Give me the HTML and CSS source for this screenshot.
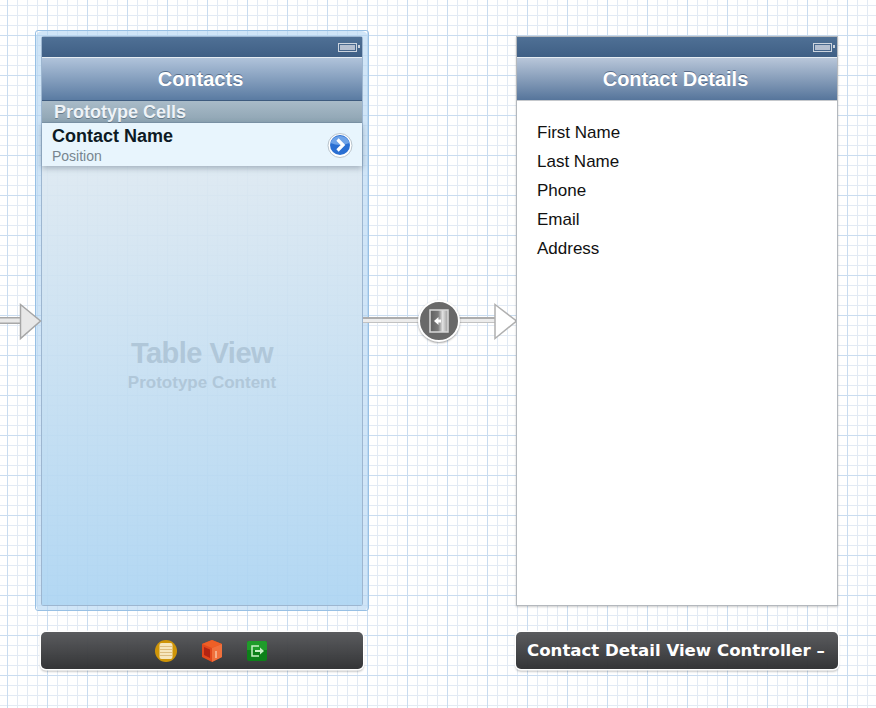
FILE: index.html
```html
<!DOCTYPE html>
<html lang="en">
<head>
<meta charset="UTF-8" />
<meta name="viewport" content="width=device-width, initial-scale=1" />
<title>Storyboard</title>
<link rel="stylesheet" href="styles.css">
</head>
<body>
<main class="canvas">

  <section class="scene scene-selected">
    <div class="screen">
      <div class="status-bar">
        <span class="battery"><span class="battery-fill"></span></span>
      </div>
      <div class="nav-bar">Contacts</div>
      <div class="section-header">Prototype Cells</div>
      <div class="cell">
        <div>
          <div class="cell-title">Contact Name</div>
          <div class="cell-sub">Position</div>
        </div>
        <svg class="disclosure" width="26" height="26" viewBox="0 0 26 26">
          <circle cx="13" cy="13.500" r="12" fill="#fff" stroke="#b9c4cc" stroke-width="1"/>
          <circle cx="13" cy="13" r="10" fill="#2a6fd2"/>
          <path d="M3.500 11 A10 10 0 0 1 22.500 11 Q13 15 3.500 11 Z" fill="#6ea3e8"/>
          <path d="M10.500 7.500 L16 13 L10.500 18.500" fill="none" stroke="#fff" stroke-width="3.200"/>
        </svg>
      </div>
      <div class="table-body">
        <div class="table-label">Table View</div>
        <div class="table-sublabel">Prototype Content</div>
      </div>
    </div>
  </section>

  <!-- incoming arrow -->
  <svg class="entry-arrow" width="44" height="40" viewBox="0 0 44 40">
    <rect x="0" y="15" width="22" height="7" fill="#a8a8a8"/>
    <rect x="0" y="16.500" width="22" height="4" fill="#e8e8e8"/>
    <path d="M20.500 2.500 L40.500 19 L20.500 36.500 Z" fill="#e8e8e8" stroke="#a6a6a6" stroke-width="1.500"/>
  </svg>

  <!-- segue -->
  <div class="segue">
    <div class="segue-line"></div>
    <div class="segue-badge">
      <svg width="24" height="26" viewBox="0 0 24 26">
        <defs>
          <linearGradient id="pageGrad" x1="0" x2="1" y1="0" y2="0">
            <stop offset="0" stop-color="#5f5f5f"/>
            <stop offset="0.450" stop-color="#7a7a7a"/>
            <stop offset="0.700" stop-color="#e2e2e2"/>
            <stop offset="1" stop-color="#9a9a9a"/>
          </linearGradient>
        </defs>
        <rect x="3" y="2" width="18" height="22" fill="url(#pageGrad)" stroke="#d8d8d8" stroke-width="1.500"/>
        <path d="M7 13 L11.500 9 V11.500 H14 V14.500 H11.500 V17 Z" fill="#fff"/>
      </svg>
    </div>
    <svg class="segue-head" width="26" height="38" viewBox="0 0 26 38">
      <path d="M2 1.500 L23.500 18 L2 35.500 Z" fill="#fff" stroke="#b0b0b0" stroke-width="1.500"/>
    </svg>
  </div>

  <section class="scene scene-detail">
    <div class="screen">
      <div class="status-bar">
        <span class="battery"><span class="battery-fill"></span></span>
      </div>
      <div class="nav-bar nav-plain">Contact Details</div>
      <ul class="details">
        <li>First Name</li>
        <li>Last Name</li>
        <li>Phone</li>
        <li>Email</li>
        <li>Address</li>
      </ul>
    </div>
  </section>

  <div class="dock dock-left">
    <svg width="24" height="24" viewBox="0 0 24 24">
      <circle cx="12" cy="12" r="11" fill="#cf9508"/>
      <rect x="5.500" y="4" width="13" height="16" rx="2" fill="#f6e6bd"/>
      <path d="M6 7.500 H18 M6 10.500 H18 M6 13.500 H18 M6 16.500 H18" stroke="#dcbd80" stroke-width="1"/>
    </svg>
    <svg width="24" height="24" viewBox="0 0 24 24">
      <path d="M12 1 L22 5 V18 L12 23 L2 18 V5 Z" fill="#e2481c"/>
      <path d="M12 1 L22 5 L12 9 L2 5 Z" fill="#ee5f26"/>
      <path d="M12 9 L22 5 V18 L12 23 Z" fill="#f0703c"/>
      <path d="M4 8 L10 10.500 V19 L4 16 Z" fill="#b32412"/>
      <path d="M16 12 V19" stroke="#f8c0a0" stroke-width="1.500"/>
    </svg>
    <svg width="22" height="22" viewBox="0 0 22 22">
      <rect x="1" y="1" width="20" height="20" rx="2" fill="#0c8019"/>
      <path d="M1 3 a2 2 0 0 1 2 -2 H19 a2 2 0 0 1 2 2 V10 H1 Z" fill="#1f9c2a"/>
      <path d="M13 6 H6 V16 H13" fill="none" stroke="#c6f0c4" stroke-width="1.500"/>
      <path d="M9 10 H14 V7.500 L18 11 L14 14.500 V12 H9 Z" fill="#c6f0c4"/>
    </svg>
  </div>

  <div class="dock dock-right">Contact Detail View Controller –</div>
</main>
</body>
</html>
```

FILE: styles.css
```css
html, body {
  margin: 0;
  height: 100%;
}
body {
  font-family: "Liberation Sans", Arial, sans-serif;
  background-color: #fff;
  background-image:
    linear-gradient(#c9dcf0 1px, transparent 1px),
    linear-gradient(90deg, #c9dcf0 1px, transparent 1px),
    linear-gradient(#e2eaf4 1px, transparent 1px),
    linear-gradient(90deg, #e2eaf4 1px, transparent 1px);
  background-size: 40px 40px, 40px 40px, 10px 10px, 10px 10px;
  background-position: 0 35px, 7px 0, 0 5px, 7px 0;
  overflow: hidden;
}
.canvas {
  position: relative;
  width: 876px;
  height: 708px;
}

/* scenes sit on a free canvas */
.scene {
  position: absolute;
  top: 37px;
  width: 320px;
  height: 568px;
}
.scene-detail {
  left: 517px;
  background: #fff;
  box-shadow: 0 0 0 1px #b4b8bd, 0 1px 2px 1px rgb(0 0 0 / 0.2);
}
.scene-selected {
  left: 42px;
  box-shadow: 0 0 0 1px #9db6d0, 0 0 0 6px rgb(176 212 242 / 0.6);
  border-radius: 2px;
}
/* thin selection ring round the first scene */
.scene-selected::before {
  content: "";
  position: absolute;
  inset: -7px -7px -6px -7px;
  border: 1px solid #98c0e4;
  border-radius: 3px;
}
.screen {
  display: flex;
  flex-direction: column;
  height: 100%;
  position: relative;
}
.status-bar {
  height: 20px;
  flex: none;
  display: flex;
  align-items: center;
  justify-content: flex-end;
  background: linear-gradient(#4f7095, #3f5f85);
  border-bottom: 1px solid #e6edf3;
}
.battery {
  width: 15px;
  height: 5px;
  border: 1px solid #ccd4de;
  margin-right: 5px;
  padding: 1px;
  position: relative;
}
.battery::after {
  content: "";
  position: absolute;
  right: -4px;
  top: 1px;
  width: 2px;
  height: 3px;
  background: #ccd4de;
}
.battery-fill {
  display: block;
  height: 100%;
  background: #b4bfd0;
}
.nav-bar {
  height: 42px;
  flex: none;
  display: flex;
  align-items: center;
  justify-content: center;
  padding-right: 3px;
  color: #fff;
  font-size: 20px;
  font-weight: bold;
  text-shadow: 0 -1px 0 rgb(60 80 110 / 0.7);
  background: linear-gradient(#b0c3da, #5a7ba2);
  border-bottom: 1px solid #3e5b7e;
}
.nav-plain {
  background: linear-gradient(#b8c6d9, #56759b);
  border-bottom: 1px solid #c5c8cc;
}
.section-header {
  height: 21px;
  flex: none;
  padding-left: 12px;
  font-size: 18px;
  font-weight: bold;
  line-height: 23px;
  color: #eef3f7;
  text-shadow: 0 1px 0 rgb(70 90 105 / 0.6);
  background: linear-gradient(#a9bbc8, #8ea4b3);
  border-bottom: 1px solid #7f97a9;
}
.cell {
  height: 43px;
  flex: none;
  display: flex;
  align-items: center;
  justify-content: space-between;
  padding: 0 9px 0 10px;
  background: #e8f5fd;
  box-shadow: 0 2px 6px rgb(60 80 100 / 0.4);
  position: relative;
}
.cell-title {
  font-size: 18px;
  font-weight: bold;
  color: #0d1a24;
  line-height: 24px;
  margin-top: -2px;
}
.cell-sub {
  font-size: 14px;
  color: #77858f;
  line-height: 16px;
}
.table-body {
  flex: 1;
  display: flex;
  flex-direction: column;
  align-items: center;
  padding-top: 170px;
  background: linear-gradient(rgb(220 232 241 / 0.92), rgb(172 212 242 / 0.92));
}
.table-label {
  font-size: 29px;
  font-weight: bold;
  letter-spacing: -0.500px;
  line-height: 34px;
  color: #b0c7d9;
}
.table-sublabel {
  font-size: 17px;
  font-weight: bold;
  line-height: 25px;
  color: #b0c7d9;
}
.details {
  list-style: none;
  margin: 0;
  padding: 17px 0 0 20px;
  font-size: 17px;
  color: #111;
}
.details li {
  height: 29px;
  line-height: 29px;
}

/* arrows between scenes */
.entry-arrow {
  position: absolute;
  left: 0;
  top: 302px;
}
.segue {
  position: absolute;
  left: 363px;
  top: 300px;
  width: 155px;
  height: 42px;
}
.segue-line {
  position: absolute;
  left: 0;
  right: 22px;
  top: 17px;
  height: 3px;
  background: #ececec;
  border-top: 2px solid #adadad;
  border-bottom: 1px solid #c2c2c2;
}
.segue-badge {
  position: absolute;
  left: 55px;
  top: 0;
  width: 38px;
  height: 38px;
  border: 2px solid #fff;
  border-radius: 50%;
  background: #696969;
  box-shadow: 0 1px 2px rgb(0 0 0 / 0.35);
  display: flex;
  align-items: center;
  justify-content: center;
}
.segue-head {
  position: absolute;
  left: 130px;
  top: 3px;
}

/* bars under the scenes */
.dock {
  position: absolute;
  top: 632px;
  width: 322px;
  height: 37px;
  border-radius: 5px;
  background: linear-gradient(rgb(84 85 88 / 0.96), rgb(44 45 47 / 0.96));
  box-shadow: 0 0 0 1.500px #fff, 0 1.500px 2px 1px rgb(0 0 0 / 0.2);
  display: flex;
  align-items: center;
}
.dock-left {
  left: 41px;
  justify-content: center;
  gap: 22px;
  padding-left: 17px;
  width: 305px;
}
.dock-right {
  left: 516px;
  box-sizing: border-box;
  padding-left: 11px;
  color: #fff;
  font-family: "DejaVu Sans", sans-serif;
  font-size: 16.600px;
  font-weight: bold;
  white-space: nowrap;
}
```
